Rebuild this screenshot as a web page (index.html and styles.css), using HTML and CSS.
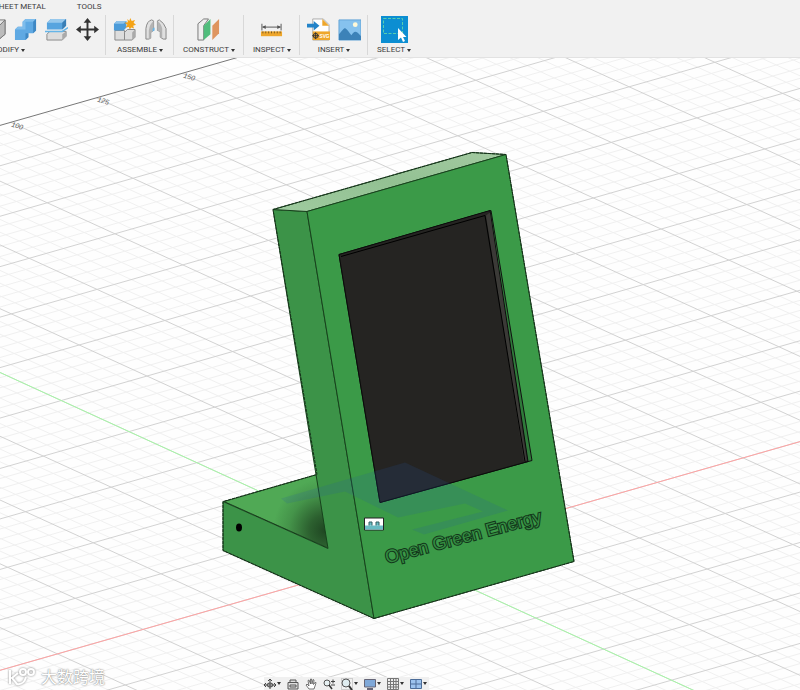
FILE: index.html
```html
<!DOCTYPE html>
<html lang="en">
<head>
  <meta charset="UTF-8">
  <meta name="viewport" content="width=device-width, initial-scale=1.0">
  <title>Open Green Energy - Design</title>
  <link rel="stylesheet" href="styles.css">
</head>
<body>
  <header class="toolbar">
    <nav class="tabs">
      <button class="tab">SHEET METAL</button>
      <button class="tab">TOOLS</button>
    </nav>

    <div class="panels">
      <section class="panel panel-modify">
        <div class="tools">
          <button class="tool" aria-label="Shell">
            <svg viewBox="0 0 24 24"><path d="M1 8L9 2H23V17L17 22H1Z" fill="#e4e4e4" stroke="#777"/><path d="M17 8L23 2V17L17 22Z" fill="#bbb" stroke="#777"/></svg>
          </button>
          <button class="tool" aria-label="Combine">
            <svg viewBox="0 0 24 24"><path d="M1 12L4 9H9V4L12 1H23V13L20 16H15V20L12 23H1Z" fill="#5fa9e3"/><path d="M1 12L4 9H9V4L12 1H23L20 4H12V12Z" fill="#7fbdec"/><path d="M20 4L23 1V13L20 16Z M12 16H15V20L12 23Z" fill="#3f88c4"/></svg>
          </button>
          <button class="tool" aria-label="Split body">
            <svg viewBox="0 0 24 24"><path d="M2 17L5 14H22V19L18 23H2Z" fill="#ddd" stroke="#8a8a8a"/><path d="M18 17L22 14V19L18 23Z" fill="#aaa"/><path d="M0 14H18L24 10" fill="none" stroke="#65b5e8" stroke-width="1.5"/><path d="M2 5L6 1H22V8L18 12H2Z" fill="#57a4df"/><path d="M2 5L6 1H22L18 5Z" fill="#97c8ec"/><path d="M18 5L22 1V8L18 12Z" fill="#397eb5"/></svg>
          </button>
          <button class="tool" aria-label="Move">
            <svg viewBox="0 0 24 24"><path d="M12 4V20M4 12H20" stroke="#333" stroke-width="2"/><path d="M12 0L16 5H8ZM12 24L8 19H16ZM0 12L5 8V16ZM24 12L19 16V8Z" fill="#333"/></svg>
          </button>
        </div>
        <button class="panel-label">MODIFY<span class="caret"></span></button>
      </section>

      <section class="panel">
        <div class="tools">
          <button class="tool" aria-label="New component">
            <svg viewBox="0 0 24 24"><path d="M2 13H12V23H2Z" fill="#ddd" stroke="#888"/><path d="M12 15L15 12H23V20L20 23H12Z" fill="#ddd" stroke="#888"/><path d="M20 15L23 12V20L20 23Z" fill="#aaa"/><path d="M1 6L4 3H14V10L11 13H1Z" fill="#4b9bd9"/><path d="M1 6L4 3H14L11 6Z" fill="#8dc2ea"/><path d="M18 0L19.5 3L23 2L21.500 5L24 7L21 8L22 11L19 10L17.500 12L16.500 9.500L13 10L15 7L12 5L15.500 4.500L15 1L17 3Z" fill="#f5a316"/></svg>
          </button>
          <button class="tool" aria-label="Joint">
            <svg viewBox="0 0 24 24"><path d="M2 22V11Q3 3 8 2L10 3V13L7 15V21L5 22Z" fill="#e0e0e0" stroke="#858585"/><path d="M5 22V13Q6 6 10 3V13L7 15V21Z" fill="#b4b4b4"/><path d="M14 3L16 2Q21 5 23 11V22L20 22L17 20V14L14 13Z" fill="#e0e0e0" stroke="#858585"/><path d="M14 3Q18 6 19 11V21L17 20V14L14 13Z" fill="#b4b4b4"/><path d="M9 11L11 10V13L9 14Z" fill="#65b5e8"/></svg>
          </button>
        </div>
        <button class="panel-label">ASSEMBLE<span class="caret"></span></button>
      </section>

      <section class="panel">
        <div class="tools">
          <button class="tool" aria-label="Offset plane">
            <svg viewBox="0 0 24 24"><path d="M1 6L7 1H12L7 8V23H1Z" fill="#eee" stroke="#777"/><path d="M7 8L14 1V17L7 23Z" fill="#50bd7c"/><path d="M16 8L23 1V16L16 23Z" fill="#df955f"/></svg>
          </button>
        </div>
        <button class="panel-label">CONSTRUCT<span class="caret"></span></button>
      </section>

      <section class="panel">
        <div class="tools">
          <button class="tool" aria-label="Measure">
            <svg viewBox="0 0 24 24"><path d="M2 6V13M22 6V13M3 9.500H21" stroke="#555"/><path d="M2 9.500L6 7.500V11.500ZM22 9.500L18 7.500V11.500Z" fill="#555"/><path d="M1 14H23V19H1Z" fill="#eea62b"/><path d="M3 14V16M6 14V16M9 14V16M12 14V16M15 14V16M18 14V16M21 14V16" stroke="#7a5a20"/></svg>
          </button>
        </div>
        <button class="panel-label">INSPECT<span class="caret"></span></button>
      </section>

      <section class="panel">
        <div class="tools">
          <button class="tool" aria-label="Insert SVG">
            <svg viewBox="0 0 24 24"><path d="M6 1H17L23 7V23H6Z" fill="#fff" stroke="#aaa"/><path d="M16 1L23 8H16Z" fill="#eea62b"/><path d="M6 14H24V23H6Z" fill="#eea62b"/><path d="M0 6H7V3L13 8L7 13V10H0Z" fill="#2383c8"/><path d="M9 15V22M5.500 18.500H12.500" stroke="#333"/><circle cx="9" cy="18.500" r="2.500" fill="none" stroke="#333"/><text class="svg-tag" x="13" y="21">SVG</text></svg>
          </button>
          <button class="tool" aria-label="Canvas">
            <svg viewBox="0 0 24 24"><path d="M1 2H24V23H1Z" fill="#86c2ee"/><path d="M1 2H24V23H1Z" fill="none" stroke="#65a5d6"/><circle cx="18" cy="7" r="2.500" fill="#fff9d8"/><path d="M1 17C5 13 6 10 8 11S12 16 14 18C17 13 19 13 24 19V23H1Z" fill="#3c82b8"/></svg>
          </button>
        </div>
        <button class="panel-label">INSERT<span class="caret"></span></button>
      </section>

      <section class="panel">
        <div class="tools">
          <button class="tool tool-active" aria-label="Select">
            <svg viewBox="0 0 27 27"><path d="M2.500 2.500H21.500V17.500H2.500Z" fill="none" stroke="#58cfae" stroke-dasharray="3 1.500"/><path d="M17 12V24L20 21.500L22 26L24 25L22 21H25.500Z" fill="#fff"/></svg>
          </button>
        </div>
        <button class="panel-label">SELECT<span class="caret"></span></button>
      </section>
    </div>
  </header>

  <main class="viewport">
    <svg class="scene" viewBox="0 57 800 633" preserveAspectRatio="xMidYMid slice" role="img" aria-label="Display stand model">
      <defs>
        <linearGradient id="top-face" x1="0" y1="1" x2="1" y2="0">
          <stop offset="0" stop-color="#9fcb9f"/>
          <stop offset="0.5" stop-color="#93c193"/>
          <stop offset="1" stop-color="#a3caa1"/>
        </linearGradient>
        <radialGradient id="base-shade" gradientUnits="userSpaceOnUse" cx="325" cy="530" r="52">
          <stop offset="0" stop-color="#1f4622"/>
          <stop offset="0.3" stop-color="#2c602f"/>
          <stop offset="0.7" stop-color="#45944a"/>
          <stop offset="1" stop-color="#50a955"/>
        </radialGradient>
      </defs>

      <!-- ground grid, filled in by scene.js -->
      <g id="grid">
        <path class="grid-minor"/>
        <path class="grid-major"/>
        <path class="axis-x"/>
        <path class="axis-y"/>
        <path class="grid-edge"/>
      </g>
      <g class="grid-labels">
        <text transform="translate(11 126) rotate(16)">100</text>
        <text transform="translate(97 101) rotate(16)">125</text>
        <text transform="translate(183 77) rotate(16)">150</text>
      </g>

      <!-- stand -->
      <g class="body-edges">
        <path d="M224 501L317 474L329 548Z" fill="url(#base-shade)"/>
        <path d="M273 209L307 211L374 618L223 550V501L328 548Z" fill="#3c9348"/>
        <path d="M273 209L472 152L506 154L307 211Z" fill="url(#top-face)"/>
        <path d="M307 211L506 154L574 561L374 618Z" fill="#3b9a48"/>
      </g>
      <path class="silhouette" d="M374 618L223 550V501L317 474L273 209L472 152L506 154L574 561Z"/>
      <ellipse cx="239" cy="527" rx="3" ry="4"/>

      <!-- screen recess -->
      <path d="M339 254L491 210L532 460L380 502Z" fill="#2f7a3a" stroke="#111"/>
      <path d="M339 254L490 210L528 461L380 502Z" fill="#252422" stroke="#0b0b0b"/>
      <path d="M486 215L490 212L527 460L524 461Z" fill="#3b3a37"/>
      <path d="M341 256L485 215L525 461" fill="none" stroke="#000"/>

      <!-- selected sketch showing through the body -->
      <path d="M281 498L405 462L508 510L424 534L412 529L483 511L465 503L398 517L345 491L287 503Z" fill="#2858a8" opacity="0.16"/>

      <g>
        <path d="M364.500 517.500H383.500V529.500H364.500Z" fill="#fff" stroke="#222"/>
        <path d="M365 525H383V529H365Z" fill="#69bcc4"/>
        <path d="M369 525V521.500H372V525M376 525V521.500H379V525" fill="#69bcc4" stroke="#335e63"/>
      </g>

      <text class="emboss" transform="translate(387 563) rotate(-15)">Open Green Energy</text>
    </svg>

    <div class="watermark">
      <svg viewBox="0 0 30 20"><path d="M2 4V18M10 7L4 12L9 18C14 19 17 15 18 11M12 6A3 3 0 1 0 18 6A3 3 0 1 0 12 6M20 6A3 3 0 1 0 26 6A3 3 0 1 0 20 6"/></svg>
      <span>大数跨境</span>
    </div>

    <div class="navbar">
      <button class="nav-tool" aria-label="Orbit">
        <svg viewBox="0 0 12 12"><path d="M6 1V11M0 7H12M4 3L6 1L8 3M2 5L0 7L2 9M10 5L12 7L10 9" fill="none" stroke="#444"/><ellipse cx="6" cy="7" rx="3" ry="2" fill="none" stroke="#444"/></svg><span class="caret"></span>
      </button>
      <button class="nav-tool" aria-label="Look at">
        <svg viewBox="0 0 12 12"><path d="M1 4.500H11V11H1ZM3 4V2H9V4M3 7H9V9H3Z" fill="#ddd" stroke="#555"/></svg>
      </button>
      <button class="nav-tool" aria-label="Pan">
        <svg viewBox="0 0 12 12"><path d="M4 11L1 7L2 6L4 8L3 2.500L4 2L5.500 6V1H6.500L7 6L8 1.500L9 2L8.500 6.500L10.500 4L11 5L9 11Z" fill="#fff" stroke="#555" stroke-width="0.8"/></svg>
      </button>
      <button class="nav-tool" aria-label="Zoom">
        <svg viewBox="0 0 12 12"><circle cx="4" cy="5" r="3" fill="#e8f2f4" stroke="#555"/><path d="M6 7L9 11" stroke="#333" stroke-width="1.500"/><path d="M8 3.500H12M10 1.500V5.500M8 7H12" stroke="#444"/></svg>
      </button>
      <button class="nav-tool" aria-label="Fit">
        <svg viewBox="0 0 12 12"><path d="M0.500 0.500H11.500V11.500H0.500Z" fill="none" stroke="#aaa" stroke-dasharray="1 1"/><circle cx="5" cy="5" r="4" fill="#dfecef" stroke="#555"/><path d="M8 8L11 12" stroke="#333" stroke-width="2"/></svg><span class="caret"></span>
      </button>
      <button class="nav-tool" aria-label="Display settings">
        <svg viewBox="0 0 12 12"><path d="M0.500 1.500H11.500V9H0.500Z" fill="#7fa8d8" stroke="#667"/><path d="M3 11H9" stroke="#667" stroke-width="2"/></svg><span class="caret"></span>
      </button>
      <button class="nav-tool" aria-label="Grid and snaps">
        <svg viewBox="0 0 12 12"><path d="M0.500 0.500H11.500V11.500H0.500ZM3.500 0V12M6.500 0V12M9 0V12M0 3.500H12M0 6.500H12M0 9H12" fill="#eee" stroke="#777"/></svg><span class="caret"></span>
      </button>
      <button class="nav-tool" aria-label="Viewports">
        <svg viewBox="0 0 12 12"><path d="M0.500 1.500H11.500V10.500H0.500ZM6 1V11M0 6H12" fill="#9cc3ee" stroke="#4c6d99"/></svg><span class="caret"></span>
      </button>
    </div>
  </main>

  <script src="scene.js"></script>
</body>
</html>
```

FILE: styles.css
```css
:root {
  --bar-bg: #f1f1f1;
  --bar-border: #e2e2e2;
  --text-color: #3c3c3c;
}

* {
  box-sizing: border-box;
  margin: 0;
  padding: 0;
}

body {
  display: flex;
  flex-direction: column;
  height: 100vh;
  overflow: hidden;
  font-family: Roboto, "Liberation Sans", sans-serif;
  font-size: 8px;
  line-height: 10px;
  color: var(--text-color);
}

button {
  border: none;
  background: none;
  font: inherit;
  color: inherit;
  cursor: pointer;
}

svg {
  display: block;
}

.toolbar {
  flex: none;
  padding: 2px 0;
  background-color: var(--bar-bg);
  border-bottom: 1px solid var(--bar-border);
  overflow: hidden;
}

.tabs {
  display: flex;
  gap: 31px;
  margin-left: -6px;
}

.tab {
  white-space: nowrap;
}

.panels {
  display: flex;
  margin-left: -24px;
  padding-top: 3px;
}

.panel {
  display: flex;
  flex-direction: column;
  align-items: center;
}

.panel + .panel {
  border-left: 1px solid #d8d8d8;
}

.tools {
  display: flex;
  align-items: center;
  gap: 8px;
  height: 29px;
  padding: 0 6px 0 7px;
}

.tool {
  width: 23px;
  height: 23px;
}

.tool-active {
  width: 27px;
  height: 27px;
  background-color: #0c8ed2;
}

.svg-tag {
  font-family: "Liberation Sans", sans-serif;
  font-size: 5px;
  font-weight: bold;
  fill: #fff;
}

.panel-label {
  display: flex;
  align-items: center;
  gap: 2px;
  padding: 1px 8px 0 9px;
}

.panel-modify .panel-label {
  align-self: flex-start;
  margin-left: 5px;
}

.caret {
  border: 2px solid transparent;
  border-top: 3px solid #333;
  border-bottom: none;
}

.viewport {
  position: relative;
  flex: 1;
  min-height: 0;
  background-color: #fefefe;
  overflow: hidden;
}

.scene {
  width: 100%;
  height: 100%;
}

#grid path {
  fill: none;
  stroke-width: 1;
  vector-effect: non-scaling-stroke;
}

#grid .grid-minor {
  stroke: #f0f0f0;
}

#grid .grid-major {
  stroke: #d2d2d2;
}

#grid .grid-edge {
  stroke: #777;
}

#grid .axis-x {
  stroke: #ffa3a3;
}

#grid .axis-y {
  stroke: #a6f7a6;
}

.grid-labels {
  font-family: "Liberation Sans", sans-serif;
  font-size: 7px;
  font-style: italic;
  fill: #555;
}

.body-edges path {
  stroke: #17421c;
  stroke-linejoin: round;
}

.silhouette {
  fill: none;
  stroke: #16301a;
  stroke-dasharray: 3 1;
}

.emboss {
  font-family: "Liberation Sans", sans-serif;
  font-size: 18px;
  fill: #338a40;
  stroke: #12351a;
  stroke-width: 2;
  paint-order: stroke;
}

.watermark {
  position: absolute;
  left: 8px;
  bottom: 4px;
  display: flex;
  align-items: center;
  gap: 3px;
  font-family: "Noto Sans CJK SC", sans-serif;
  font-size: 16px;
  line-height: 20px;
  color: #fff;
  text-shadow: 0 0 2px #888, 0 0 1px #999;
}

.watermark svg {
  width: 30px;
  height: 20px;
  fill: none;
  stroke: #fff;
  stroke-width: 2;
  filter: drop-shadow(0 0 1px #888);
}

.navbar {
  position: absolute;
  left: 33%;
  bottom: 0;
  display: flex;
  align-items: center;
  gap: 6px;
  height: 13px;
  padding-right: 2px;
  background-color: #f0f0f0;
}

.nav-tool {
  display: flex;
  align-items: center;
  gap: 1px;
}

.nav-tool svg {
  width: 12px;
  height: 12px;
}
```

FILE: scene.js
```js
// Major grid cell: u runs along the x axis, v along the y axis
const origin = [65, 146.7];
const u = [85.7, -24.5];
const v = [67.8, 31.07];

const EDGE = -0.8;
const X_AXIS = 10;
const Y_AXIS = -4;
const MIN_A = -16;
const MAX_A = 14;
const MAX_B = 24;

function point(a, b) {
  const x = origin[0] + a * u[0] + b * v[0];
  const y = origin[1] + a * u[1] + b * v[1];
  return x.toFixed(1) + ' ' + y.toFixed(1);
}

function alongU(b) {
  return 'M' + point(MIN_A, b) + 'L' + point(MAX_A, b);
}

function alongV(a) {
  return 'M' + point(a, EDGE) + 'L' + point(a, MAX_B);
}

let minor = '';
let major = '';

for (let i = MIN_A * 5; i <= MAX_A * 5; i++) {
  if (i % 5 === 0) major += alongV(i / 5);
  else minor += alongV(i / 5);
}
for (let i = -3; i <= MAX_B * 5; i++) {
  if (i % 5 === 0) major += alongU(i / 5);
  else minor += alongU(i / 5);
}

const grid = document.getElementById('grid');
grid.querySelector('.grid-minor').setAttribute('d', minor);
grid.querySelector('.grid-major').setAttribute('d', major);
grid.querySelector('.grid-edge').setAttribute('d', alongU(EDGE));
grid.querySelector('.axis-x').setAttribute('d', alongU(X_AXIS));
grid.querySelector('.axis-y').setAttribute('d', alongV(Y_AXIS));
```
